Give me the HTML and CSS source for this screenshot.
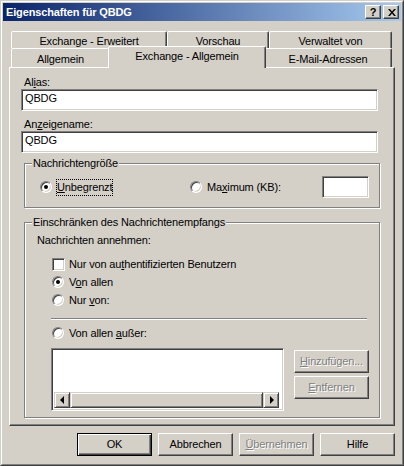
FILE: index.html
```html
<!DOCTYPE html>
<html lang="de">
<head>
<meta charset="UTF-8" />
<title>Eigenschaften für QBDG</title>
<link rel="stylesheet" href="styles.css">
</head>
<body>
  <div class="window">
    <div class="frame">
      <div class="titlebar">
        <span class="title">Eigenschaften für QBDG</span>
        <div class="caption-btns">
          <span class="cap-btn help">?</span>
          <span class="cap-btn">
            <svg width="8" height="7" viewBox="0 0 8 7">
              <path d="M0 0h2l2 2.5 2-2.5h2l-3 3.5 3 3.5h-2l-2-2.5-2 2.5h-2l3-3.5z" fill="#000"/>
            </svg>
          </span>
        </div>
      </div>

      <div class="dialog">
        <div class="tabs">
          <div class="tab-row back">
            <div class="tab tab-erweitert">Exchange - Erweitert</div>
            <div class="tab tab-vorschau">Vorschau</div>
            <div class="tab tab-verwaltet">Verwaltet von</div>
          </div>
          <div class="tab-row front">
            <div class="tab tab-allgemein">Allgemein</div>
            <div class="tab tab-active">Exchange - Allgemein</div>
            <div class="tab tab-mail">E-Mail-Adressen</div>
          </div>
        </div>

        <div class="panel">
          <label class="field-label">Al<u>i</u>as:</label>
          <div class="edit">QBDG</div>
          <label class="field-label second">An<u>z</u>eigename:</label>
          <div class="edit">QBDG</div>

          <div class="group size-group">
            <span class="legend">Nachrichtengröße</span>
            <div class="size-row">
              <div class="option opt-unlimited">
                <span class="radio checked"></span>
                <span class="focus"><u>U</u>nbegrenzt</span>
              </div>
              <div class="option">
                <span class="radio"></span>
                <span class="opt-text">Ma<u>x</u>imum (KB):</span>
              </div>
              <div class="edit size-edit"></div>
            </div>
          </div>

          <div class="group accept-group">
            <span class="legend">Einschränken des Nachrichtenempfangs</span>
            <div class="accept-title">Nachrichten annehmen:</div>
            <div class="choice first">
              <span class="checkbox"></span>
              <span class="choice-text">Nur von au<u>t</u>hentifizierten Benutzern</span>
            </div>
            <div class="choice">
              <span class="radio checked"></span>
              <span class="choice-text">V<u>o</u>n allen</span>
            </div>
            <div class="choice">
              <span class="radio"></span>
              <span class="choice-text">Nur <u>v</u>on:</span>
            </div>
            <div class="separator"></div>
            <div class="choice except">
              <span class="radio"></span>
              <span class="choice-text">Von allen <u>a</u>ußer:</span>
            </div>
            <div class="list-row">
              <div class="listbox">
                <div class="list-area"></div>
                <div class="hscroll">
                  <span class="sb-btn"><span class="arrow left"></span></span>
                  <span class="sb-thumb"></span>
                  <span class="sb-btn"><span class="arrow right"></span></span>
                </div>
              </div>
              <div class="list-btns">
                <span class="btn disabled"><u>H</u>inzufügen...</span>
                <span class="btn disabled"><u>E</u>ntfernen</span>
              </div>
            </div>
          </div>
        </div>

        <div class="buttons">
          <span class="btn default">OK</span>
          <span class="btn">Abbrechen</span>
          <span class="btn disabled"><u>Ü</u>bernehmen</span>
          <span class="btn">Hilfe</span>
        </div>
      </div>
    </div>
  </div>
</body>
</html>
```

FILE: styles.css
```css
/* Reset */
* {
  box-sizing: border-box;
}

body {
  margin: 0;
  background: #d4d0c8;
  font-family: "Liberation Sans", Arial, sans-serif;
  font-size: 11px;
  line-height: 13px;
  letter-spacing: -0.15px;
  color: #000;
}

u {
  text-decoration: underline;
  text-underline-offset: 1px;
}

/* Window frame */
.window {
  width: 404px;
  height: 466px;
  border: 1px solid;
  border-color: #d4d0c8 #404040 #404040 #d4d0c8;
  background: #d4d0c8;
}

.frame {
  height: 100%;
  border: 1px solid;
  border-color: #fff #808080 #808080 #fff;
  padding: 1px;
  display: flex;
  flex-direction: column;
}

.titlebar {
  height: 18px;
  flex-shrink: 0;
  background: linear-gradient(to right, #0a246a, #a6caf0);
  display: flex;
  align-items: center;
  justify-content: space-between;
  padding: 0 2px 0 2px;
}

.title {
  color: #fff;
  font-weight: bold;
  padding-left: 1px;
}

.caption-btns {
  display: flex;
  gap: 2px;
}

.cap-btn {
  width: 16px;
  height: 14px;
  background: #d4d0c8;
  border: 1px solid;
  border-color: #fff #404040 #404040 #fff;
  box-shadow: inset -1px -1px 0 #808080;
  display: flex;
  align-items: center;
  justify-content: center;
  font-weight: bold;
  font-size: 11px;
}

.cap-btn svg {
  margin-left: 1px;
}

/* Dialog body */
.dialog {
  flex: 1;
  padding: 10px 6px 0 6px;
  display: flex;
  flex-direction: column;
}

.tabs {
  height: 36px;
  padding: 0 3px 0 2px;
  display: flex;
  flex-direction: column;
}

.tab-row {
  display: flex;
}

.tab-row.back {
  height: 17px;
}

.tab-row.front {
  height: 19px;
  align-items: flex-start;
}

.tab {
  height: 100%;
  background: #d4d0c8;
  border: 1px solid;
  border-bottom: none;
  border-color: #fff #404040 transparent #fff;
  border-radius: 2px 2px 0 0;
  box-shadow: inset -1px 0 0 #808080;
  display: flex;
  align-items: center;
  justify-content: center;
  padding-top: 2px;
  white-space: nowrap;
}

.tab-erweitert { width: 156px; }
.tab-vorschau { width: 102px; }
.tab-verwaltet { width: 123px; }
.tab-allgemein { width: 99px; }
.tab-mail { width: 128px; }

.tab-active {
  width: 158px;
  height: 22px;
  margin: -2px -2px 0;
  padding-top: 0;
  padding-bottom: 2px;
  position: relative;
  z-index: 2;
}

.panel {
  height: 359px;
  border: 1px solid;
  border-color: #fff #404040 #404040 #fff;
  box-shadow: inset -1px -1px 0 #808080;
  padding: 8px 16px 0 11px;
  display: flex;
  flex-direction: column;
}

.field-label {
  display: block;
  height: 13px;
  padding-left: 3px;
}

.field-label.second {
  margin-top: 7px;
}

.edit {
  height: 22px;
  background: #fff;
  border: 1px solid;
  border-color: #808080 #fff #fff #808080;
  box-shadow: inset 1px 1px 0 #404040, inset -1px -1px 0 #d4d0c8;
  padding: 2px 3px 0;
}

/* Group boxes */
.group {
  margin: 0 -2px 0 3px;
  border: 1px solid #808080;
  box-shadow: inset 1px 1px 0 #fff, 1px 1px 0 #fff;
  display: flex;
  flex-direction: column;
}

.legend {
  align-self: flex-start;
  margin: -7px 0 0 7px;
  padding: 0 1px;
  background: #d4d0c8;
}

.size-group {
  margin-top: 10px;
  height: 45px;
}

.size-row {
  display: flex;
  align-items: center;
  height: 22px;
  margin-top: 6px;
  padding-left: 15px;
}

.option {
  display: flex;
  align-items: center;
}

.opt-unlimited {
  width: 150px;
}

.focus {
  margin-left: 4px;
  border: 1px dotted #000;
  padding: 1px 0 1px 0;
}

.opt-text {
  margin-left: 5px;
}

.size-edit {
  width: 47px;
  margin-left: auto;
  margin-right: 10px;
}

.radio {
  width: 12px;
  height: 12px;
  flex-shrink: 0;
  border-radius: 50%;
  border: 1px solid;
  border-color: #808080 #fff #fff #808080;
  box-shadow: inset 1px 1px 0 #404040, inset -1px -1px 0 #d4d0c8;
  background: #fff;
  display: flex;
  align-items: center;
  justify-content: center;
}

.radio.checked::after {
  content: "";
  width: 4px;
  height: 4px;
  border-radius: 50%;
  background: #000;
}

.checkbox {
  width: 13px;
  height: 13px;
  flex-shrink: 0;
  border: 1px solid;
  border-color: #808080 #fff #fff #808080;
  box-shadow: inset 1px 1px 0 #404040, inset -1px -1px 0 #d4d0c8;
  background: #fff;
}

.accept-group {
  margin-top: 14px;
  height: 196px;
}

.accept-title {
  margin-top: 5px;
  padding-left: 12px;
}

.choice {
  height: 18px;
  display: flex;
  align-items: center;
  padding-left: 27px;
}

.choice.first {
  margin-top: 8px;
}

.choice .choice-text {
  margin-left: 5px;
}

.choice.first .choice-text {
  margin-left: 4px;
}

.choice.except {
  margin-top: 4px;
}

.separator {
  margin: 9px 0 0 26px;
  width: 316px;
  height: 2px;
  border-top: 1px solid #808080;
  border-bottom: 1px solid #fff;
}

.list-row {
  display: flex;
  margin-top: 6px;
  padding-left: 26px;
}

.listbox {
  width: 233px;
  height: 63px;
  background: #fff;
  border: 1px solid;
  border-color: #808080 #fff #fff #808080;
  box-shadow: inset 1px 1px 0 #404040, inset -1px -1px 0 #d4d0c8;
  padding: 2px 4px 2px 2px;
  display: flex;
  flex-direction: column;
}

.list-area {
  flex: 1;
}

.hscroll {
  height: 16px;
  display: flex;
  background: #e8e6e2;
}

.sb-btn,
.sb-thumb {
  background: #d4d0c8;
  border: 1px solid;
  border-color: #d4d0c8 #404040 #404040 #d4d0c8;
  box-shadow: inset 1px 1px 0 #fff, inset -1px -1px 0 #808080;
}

.sb-btn {
  width: 16px;
  display: flex;
  align-items: center;
  justify-content: center;
}

.sb-thumb {
  flex: 1;
}

.arrow {
  width: 0;
  height: 0;
  border-top: 4px solid transparent;
  border-bottom: 4px solid transparent;
}

.arrow.left {
  border-right: 4px solid #000;
  margin-right: 1px;
}

.arrow.right {
  border-left: 4px solid #000;
  margin-left: 1px;
}

.list-btns {
  margin: 2px 0 0 10px;
  display: flex;
  flex-direction: column;
  gap: 3px;
}

/* Push buttons */
.btn {
  width: 75px;
  height: 23px;
  background: #d4d0c8;
  border: 1px solid;
  border-color: #fff #404040 #404040 #fff;
  box-shadow: inset -1px -1px 0 #808080;
  display: flex;
  align-items: center;
  justify-content: center;
  white-space: nowrap;
}

.btn.default {
  border-color: #000;
  box-shadow: inset 1px 1px 0 #fff, inset -1px -1px 0 #404040, inset -2px -2px 0 #808080;
}

.btn.disabled {
  color: #808080;
  text-shadow: 1px 1px 0 #fff;
}

.buttons {
  margin-top: 7px;
  display: flex;
  justify-content: flex-end;
  gap: 6px;
}
```
